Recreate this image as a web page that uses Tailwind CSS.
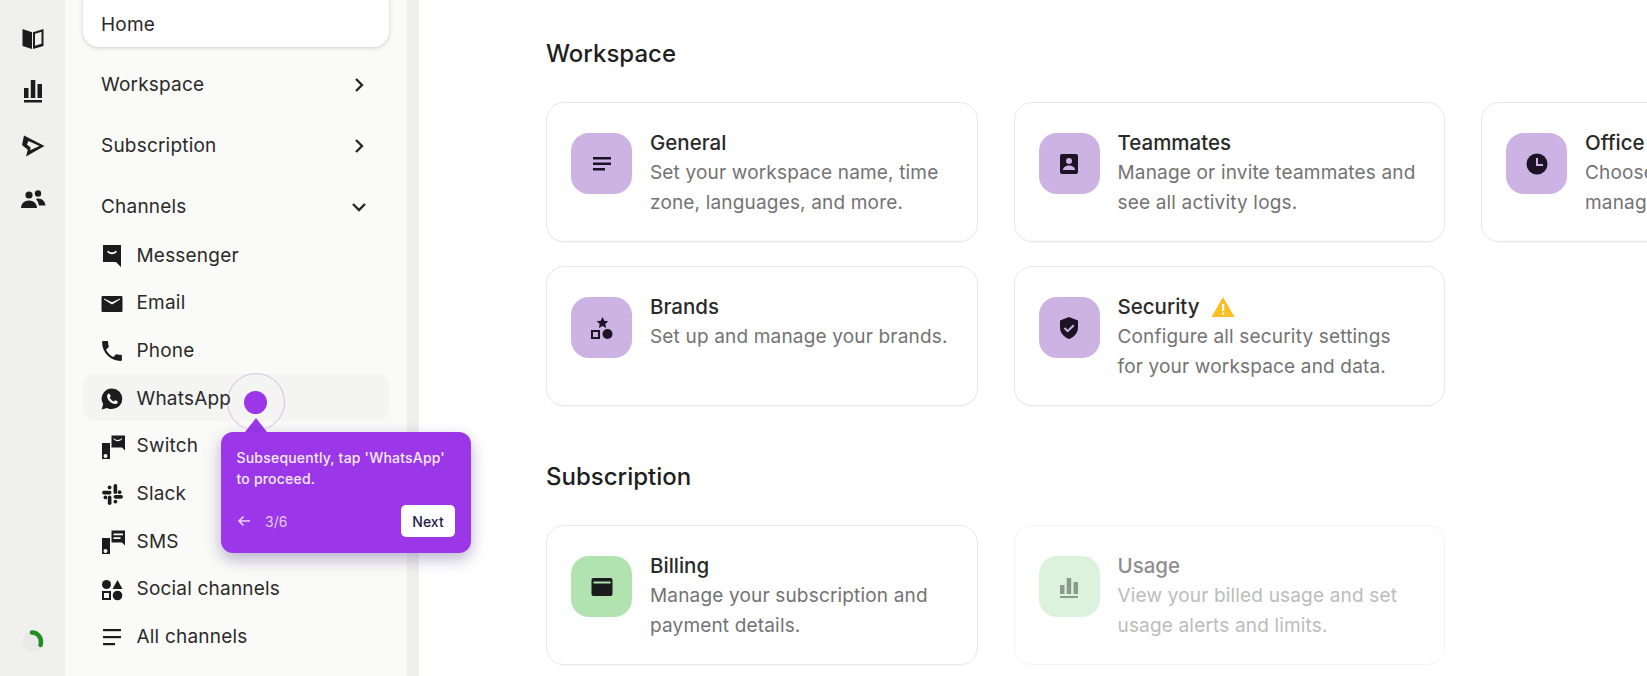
<!DOCTYPE html>
<html lang="en">
<head>
    <meta charset="UTF-8">
    <meta name="viewport" content="width=device-width, initial-scale=1.0">
    <title>Settings</title>
    <script src="https://cdn.jsdelivr.net/npm/@tailwindcss/browser@4"></script>
</head>
<body class="h-[676px] overflow-hidden bg-white font-['Inter',sans-serif] text-[#2a2a2a]">
    <div class="relative flex h-[676px] overflow-hidden">
        <!-- icon rail -->
        <div class="flex w-[65px] shrink-0 flex-col items-center bg-[#f0f0ee] pt-[25px] text-[#1c1c1e]">
            <div class="flex h-[26px] items-center">
                <svg width="24" height="24" viewBox="0 0 24 24" fill="currentColor"><path d="M1.500 3 11 6.300V23l-9.500-3z"/><path fill-rule="evenodd" d="M12 6.300 22.500 3v17L12 23zm2 1.500v12l6.500-2V5.800z"/></svg>
            </div>
            <div class="mt-[27px] flex h-[26px] items-center">
                <svg width="24" height="26" viewBox="0 0 24 26" fill="currentColor"><rect x="3" y="10" width="4.500" height="10"/><rect x="9.800" y="2" width="4.500" height="18"/><rect x="16.500" y="6" width="4.500" height="14"/><rect x="3" y="22" width="18" height="2.500"/></svg>
            </div>
            <div class="mt-[29px] flex h-[26px] items-center">
                <svg width="24" height="24" viewBox="0 0 24 24" fill="currentColor"><path fill-rule="evenodd" d="M3 1.500 23.500 12 5 22.500 6.800 15.700 1 11zM7.500 7l-1.600 3.400 3.700 3.100-.6 2.700L18.500 12z"/></svg>
            </div>
            <div class="mt-[28px] flex h-[26px] items-center">
                <svg width="26" height="24" viewBox="0 0 26 24" fill="currentColor"><circle cx="9" cy="7" r="3.600"/><circle cx="18" cy="5.500" r="3.200"/><path d="M1 20c0-4.500 3.500-7.500 8-7.500s8 3 8 7.500z"/><path d="M16 11c4.500-1.500 9 1.500 9.500 6.500h-6.500c-.5-2.500-1.500-4.500-3-6.500z"/></svg>
            </div>
            <div class="mt-auto mb-[22px]">
                <svg width="26" height="26" viewBox="0 0 26 26" fill="none"><circle cx="13" cy="13" r="10.500" fill="#e9e9e7"/><path d="M12 4.500C17 4.500 21 8.500 21 14c0 1.200-.2 2.300-.5 3" stroke="#1f8f1f" stroke-width="4.500" stroke-linecap="round"/></svg>
            </div>
        </div>

        <!-- sidebar -->
        <div class="w-[342px] shrink-0 bg-[#fafaf8] px-[18px] text-[19px] tracking-[0.2px]">
            <div class="-mt-[12px] flex h-[59px] items-center rounded-[16px] bg-white pl-[18px] pt-[15px] shadow-[0_1px_4px_rgba(0,0,0,0.18)]">Home</div>
            <div class="mt-[8px] flex h-[60px] items-center justify-between pl-[18px] pr-[24px]">
                <span>Workspace</span>
                <svg width="12" height="16" viewBox="0 0 12 16" fill="none" stroke="#27272a" stroke-width="2.400"><path d="M3 2l6 6-6 6"/></svg>
            </div>
            <div class="mt-[1px] flex h-[60px] items-center justify-between pl-[18px] pr-[24px]">
                <span>Subscription</span>
                <svg width="12" height="16" viewBox="0 0 12 16" fill="none" stroke="#27272a" stroke-width="2.400"><path d="M3 2l6 6-6 6"/></svg>
            </div>
            <div class="mt-[1px] flex h-[60px] items-center justify-between pl-[18px] pr-[22px]">
                <span>Channels</span>
                <svg width="16" height="12" viewBox="0 0 16 12" fill="none" stroke="#27272a" stroke-width="2.400"><path d="M2 3l6 6 6-6"/></svg>
            </div>

            <div class="-mt-[6.500px] flex flex-col">
                <div class="flex h-[47.700px] items-center gap-[13.500px] pl-[18px] pt-[3px]">
                    <svg width="22" height="24" viewBox="0 0 22 24" fill="#1c1c1e"><path fill-rule="evenodd" d="M2 1h18v22l-5-5H2zm4 6.500c2 3.500 8 3.500 10 0l-1.400-.8c-1.500 2-5.700 2-7.200 0z"/></svg>
                    <span>Messenger</span>
                </div>
                <div class="flex h-[47.700px] items-center gap-[13.500px] pl-[18px] pt-[3px]">
                    <svg width="22" height="22" viewBox="0 0 22 22" fill="#1c1c1e"><path fill-rule="evenodd" d="M2 3h18c1 0 1.500.5 1.500 1.500v13c0 1-.5 1.500-1.500 1.500H2c-1 0-1.500-.5-1.500-1.500v-13C.5 3.500 1 3 2 3zm1 3.500 8 5 8-5V5.500L11 9.300 3 5.500z"/></svg>
                    <span>Email</span>
                </div>
                <div class="flex h-[47.700px] items-center gap-[13.500px] pl-[18px] pt-[3px]">
                    <svg width="22" height="22" viewBox="2 2 20 20" fill="#1c1c1e"><path d="M6.620 10.790c1.440 2.830 3.760 5.140 6.590 6.590l2.200-2.200c.27-.27.67-.36 1.020-.24 1.120.37 2.330.57 3.570.57.55 0 1 .45 1 1V20c0 .55-.45 1-1 1-9.390 0-17-7.610-17-17 0-.55.45-1 1-1h3.500c.55 0 1 .45 1 1 0 1.250.2 2.450.57 3.570.11.35.03.74-.25 1.020z"/></svg>
                    <span>Phone</span>
                </div>
                <div class="flex h-[47.700px] items-center gap-[13.500px] rounded-[12px] bg-[#f4f4f2] pl-[18px] pt-[3px]">
                    <svg width="22" height="22" viewBox="0 0 22 22"><path fill="#1c1c1e" d="M11 .5a10.300 10.300 0 0 1 0 20.600c-1.800 0-3.400-.4-4.900-1.200L.6 21.500l1.600-5.300A10.300 10.300 0 0 1 11 .5z"/><path fill="#f4f4f2" d="M7.800 5.500c-.6 0-1.700.9-1.700 2.700 0 3.600 4.300 7.800 8 7.800 1.700 0 2.700-1.200 2.700-2.100 0-.5-2.300-1.700-2.700-1.600-.4.100-.9 1.100-1.300 1.100-1 0-3.800-2.400-4-3.800 0-.4.900-.9.900-1.400 0-.4-1-2.700-1.900-2.700z"/></svg>
                    <span>WhatsApp</span>
                </div>
                <div class="flex h-[47.700px] items-center gap-[11.500px] pl-[18px] pt-[3px]">
                    <svg width="24" height="24" viewBox="0 0 24 24" fill="#1c1c1e"><path fill-rule="evenodd" d="M1 8h8v16H1zm3.500 11a2 2 0 1 0 0 4 2 2 0 0 0 0-4z"/><path fill-rule="evenodd" d="M10.500 .5H24v15l-3-3H10.500zm2 2.500v1c2.500 3 6 3 8.500 0V3c-2.500 2.500-6 2.500-8.500 0z"/></svg>
                    <span>Switch</span>
                </div>
                <div class="flex h-[47.700px] items-center gap-[12.500px] pl-[18px] pt-[3px]">
                    <svg width="23" height="23" viewBox="0 0 22 22" fill="#1c1c1e"><rect x="1" y="7.500" width="9" height="3.500" rx="1.750"/><circle cx="8.200" cy="4.200" r="1.800"/><rect x="12" y="1" width="3.500" height="9.500" rx="1.750"/><circle cx="17.800" cy="8.800" r="1.800"/><rect x="12" y="11.500" width="9" height="3.500" rx="1.750"/><circle cx="13.800" cy="17.800" r="1.800"/><rect x="6.500" y="12" width="3.500" height="9" rx="1.750"/><circle cx="4.200" cy="13.800" r="1.800"/></svg>
                    <span>Slack</span>
                </div>
                <div class="flex h-[47.700px] items-center gap-[11.500px] pl-[18px] pt-[3px]">
                    <svg width="24" height="24" viewBox="0 0 24 24" fill="#1c1c1e"><path fill-rule="evenodd" d="M1 8h8v16H1zm3.500 11a2 2 0 1 0 0 4 2 2 0 0 0 0-4z"/><path fill-rule="evenodd" d="M10.500 .5H24v15l-3-3H10.500zm2 3v1.800h9.500V3.500zm0 3.700V9h7V7.200z"/></svg>
                    <span>SMS</span>
                </div>
                <div class="flex h-[47.700px] items-center gap-[13.500px] pl-[18px] pt-[3px]">
                    <svg width="22" height="22" viewBox="0 0 22 22" fill="#1c1c1e"><circle cx="5.500" cy="5.500" r="4.500"/><path d="M16.500 1l5 9h-10z"/><path fill-rule="evenodd" d="M1 12h9v9H1zm2 2v5h5v-5z"/><circle cx="16.500" cy="16.500" r="4.800"/></svg>
                    <span>Social channels</span>
                </div>
                <div class="flex h-[47.700px] items-center gap-[13.500px] pl-[18px] pt-[3px]">
                    <svg width="22" height="22" viewBox="0 0 22 22" fill="#1c1c1e"><rect x="2" y="3" width="18" height="2.200"/><rect x="2" y="10" width="18" height="2.200"/><rect x="2" y="17" width="12" height="2.200"/></svg>
                    <span>All channels</span>
                </div>
            </div>
        </div>
        <div class="w-[12px] shrink-0 bg-[#efefec]"></div>

        <!-- main -->
        <div class="min-w-0 flex-1 pl-[127px]">
            <h2 class="mt-[38px] text-[24px] leading-[32px] font-medium text-[#1f1f1f]">Workspace</h2>
            <div class="mt-[32px] grid grid-cols-[repeat(3,431.5px)] gap-x-[36px] gap-y-[24px]">
                <div class="flex h-[140px] gap-[18px] rounded-[18px] border border-[#e8e8e6] p-[30px_24px] shadow-[0_1px_1px_rgba(0,0,0,0.03)]">
                    <div class="flex h-[61px] w-[61px] shrink-0 items-center justify-center rounded-[18px] bg-[#ccb3e4]">
                        <svg width="22" height="22" viewBox="0 0 22 22" fill="#1c1424"><rect x="2" y="4" width="18" height="2.500"/><rect x="2" y="9.500" width="18" height="2.500"/><rect x="2" y="15" width="12" height="2.500"/></svg>
                    </div>
                    <div class="-mt-[6px]">
                        <div class="text-[20.500px] leading-[31px] font-medium text-[#2a2a2a]">General</div>
                        <div class="text-[19px] leading-[30px] tracking-[0.17px] text-[#737373]">Set your workspace name, time zone, languages, and more.</div>
                    </div>
                </div>
                <div class="flex h-[140px] gap-[18px] rounded-[18px] border border-[#e8e8e6] p-[30px_24px] shadow-[0_1px_1px_rgba(0,0,0,0.03)]">
                    <div class="flex h-[61px] w-[61px] shrink-0 items-center justify-center rounded-[18px] bg-[#ccb3e4]">
                        <svg width="20" height="22" viewBox="0 0 20 22"><rect x="1" y="1" width="18" height="20" rx="2" fill="#1c1424"/><circle cx="10" cy="8" r="3" fill="#ccb3e4"/><path d="M4 17c0-3 3-4.500 6-4.500s6 1.500 6 4.500z" fill="#ccb3e4"/></svg>
                    </div>
                    <div class="-mt-[6px]">
                        <div class="text-[20.500px] leading-[31px] font-medium text-[#2a2a2a]">Teammates</div>
                        <div class="text-[19px] leading-[30px] tracking-[0.17px] text-[#737373]">Manage or invite teammates and see all activity logs.</div>
                    </div>
                </div>
                <div class="flex h-[140px] gap-[18px] rounded-[18px] border border-[#e8e8e6] p-[30px_24px] shadow-[0_1px_1px_rgba(0,0,0,0.03)]">
                    <div class="flex h-[61px] w-[61px] shrink-0 items-center justify-center rounded-[18px] bg-[#ccb3e4]">
                        <svg width="22" height="22" viewBox="0 0 22 22"><circle cx="11" cy="11" r="10.500" fill="#1c1424"/><path d="M11 5v7h6" fill="none" stroke="#ccb3e4" stroke-width="2"/></svg>
                    </div>
                    <div class="-mt-[6px]">
                        <div class="text-[20.500px] leading-[31px] font-medium text-[#2a2a2a]">Office hours</div>
                        <div class="text-[19px] leading-[30px] tracking-[0.17px] text-[#737373]">Choose your office hours and manage your holidays.</div>
                    </div>
                </div>
                <div class="flex h-[140px] gap-[18px] rounded-[18px] border border-[#e8e8e6] p-[30px_24px] shadow-[0_1px_1px_rgba(0,0,0,0.03)]">
                    <div class="flex h-[61px] w-[61px] shrink-0 items-center justify-center rounded-[18px] bg-[#ccb3e4]">
                        <svg width="24" height="24" viewBox="0 0 24 24" fill="#1c1424"><path d="M12.500 1l1.800 3.700 4 .5-3 2.800.8 4-3.600-2-3.600 2 .8-4-3-2.800 4-.5z"/><path fill-rule="evenodd" d="M1 14h9v9H1zm2 2v5h5v-5z"/><circle cx="17.500" cy="18" r="5"/></svg>
                    </div>
                    <div class="-mt-[6px]">
                        <div class="text-[20.500px] leading-[31px] font-medium text-[#2a2a2a]">Brands</div>
                        <div class="text-[19px] leading-[30px] tracking-[0.17px] text-[#737373]">Set up and manage your brands.</div>
                    </div>
                </div>
                <div class="flex h-[140px] gap-[18px] rounded-[18px] border border-[#e8e8e6] p-[30px_24px] shadow-[0_1px_1px_rgba(0,0,0,0.03)]">
                    <div class="flex h-[61px] w-[61px] shrink-0 items-center justify-center rounded-[18px] bg-[#ccb3e4]">
                        <svg width="20" height="24" viewBox="0 0 20 24"><path d="M10 1l9 3.500v7c0 5.500-4 9.500-9 11.500-5-2-9-6-9-11.500v-7z" fill="#1c1424"/><path d="M5.500 12l3.200 3.200 6-6" fill="none" stroke="#ccb3e4" stroke-width="2"/></svg>
                    </div>
                    <div class="-mt-[6px]">
                        <div class="flex items-center gap-[11px] text-[20.500px] leading-[31px] font-medium text-[#2a2a2a]">
                            Security
                            <svg width="24" height="22" viewBox="0 0 24 22"><path d="M12 1 23.500 21H.5z" fill="#fbbf24"/><rect x="11" y="8" width="2.200" height="7" fill="#fff"/><rect x="11" y="16.500" width="2.200" height="2.200" fill="#fff"/></svg>
                        </div>
                        <div class="text-[19px] leading-[30px] tracking-[0.17px] text-[#737373]">Configure all security settings for your workspace and data.</div>
                    </div>
                </div>
            </div>

            <h2 class="mt-[55px] text-[24px] leading-[32px] font-medium text-[#1f1f1f]">Subscription</h2>
            <div class="mt-[32px] grid grid-cols-[repeat(3,431.5px)] gap-x-[36px]">
                <div class="flex h-[140px] gap-[18px] rounded-[18px] border border-[#e8e8e6] p-[30px_24px] shadow-[0_1px_1px_rgba(0,0,0,0.03)]">
                    <div class="flex h-[61px] w-[61px] shrink-0 items-center justify-center rounded-[18px] bg-[#b0e3b0]">
                        <svg width="22" height="20" viewBox="0 0 22 20"><rect x="0.500" y="1" width="21" height="18" rx="2" fill="#1c1c1e"/><rect x="2.500" y="4.500" width="17" height="2" fill="#b0e3b0"/></svg>
                    </div>
                    <div class="-mt-[6px]">
                        <div class="text-[20.500px] leading-[31px] font-medium text-[#2a2a2a]">Billing</div>
                        <div class="text-[19px] leading-[30px] tracking-[0.17px] text-[#737373]">Manage your subscription and payment details.</div>
                    </div>
                </div>
                <div class="flex h-[140px] gap-[18px] rounded-[18px] border border-[#f3f3f2] p-[30px_24px]">
                    <div class="flex h-[61px] w-[61px] shrink-0 items-center justify-center rounded-[18px] bg-[#dcf2dc]">
                        <svg width="22" height="24" viewBox="0 0 22 24" fill="#8c9a8c"><rect x="2" y="10" width="4.500" height="9"/><rect x="8.700" y="3" width="4.500" height="16"/><rect x="15.500" y="7" width="4.500" height="12"/><rect x="2" y="21" width="18" height="2"/></svg>
                    </div>
                    <div class="-mt-[6px]">
                        <div class="text-[20.500px] leading-[31px] font-medium text-[#8f8f8f]">Usage</div>
                        <div class="text-[19px] leading-[30px] tracking-[0.17px] text-[#bcbcbc]">View your billed usage and set usage alerts and limits.</div>
                    </div>
                </div>
            </div>
        </div>

        <!-- guide pin and tooltip -->
        <div class="absolute top-[373px] left-[227px] h-[58px] w-[58px] rounded-full border border-[#9b37e8]/30"></div>
        <div class="absolute top-[391px] left-[244px] h-[23px] w-[23px] rounded-full bg-[#9b37e8]"></div>
        <div class="absolute top-[418px] left-[245px] h-0 w-0 border-x-[11px] border-b-[14px] border-x-transparent border-b-[#9b37e8]"></div>
        <div class="absolute top-[432px] left-[221px] h-[121px] w-[250px] rounded-[12px] bg-[#9b37e8] px-[15.500px] pt-[15px] text-white shadow-[0_6px_16px_rgba(60,40,120,0.35)]">
            <p class="text-[14px] leading-[21px] font-medium tracking-[0.2px] text-white/90">Subsequently, tap 'WhatsApp' to proceed.</p>
            <div class="absolute right-[16px] bottom-[16px] left-[16px] flex items-center">
                <svg width="14" height="12" viewBox="0 0 14 12" fill="none" stroke="#e9d5ff" stroke-width="1.600"><path d="M13 6H2M6.500 1.500 2 6l4.500 4.500"/></svg>
                <span class="ml-[14px] text-[14px] text-white/75">3/6</span>
                <span class="ml-auto flex h-[32px] w-[54px] items-center justify-center rounded-[5px] bg-white text-[14px] font-medium text-[#1e1b4b]">Next</span>
            </div>
        </div>
    </div>
</body>
</html>
